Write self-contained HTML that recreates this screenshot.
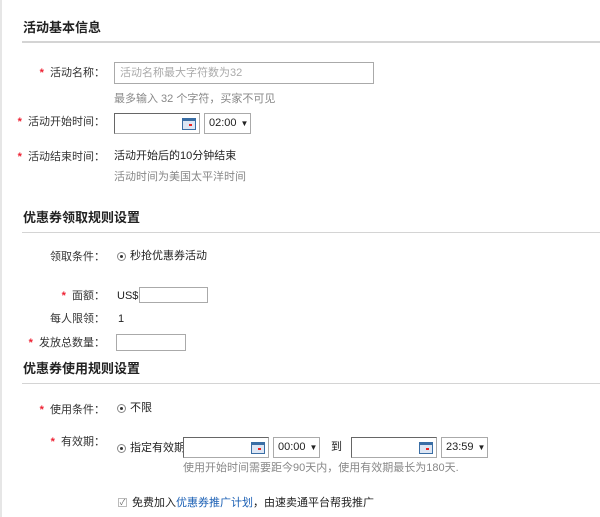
<!DOCTYPE html><html><head><meta charset="utf-8"><style>
body{margin:0;width:600px;height:517px;background:#fff;position:relative;overflow:hidden;font-family:"Liberation Sans","Noto Sans CJK SC",sans-serif;font-size:11px;color:#333}
.a{position:absolute;white-space:nowrap;line-height:14px}
.h{font-size:13px;font-weight:bold;color:#222}
.ln{position:absolute;left:22px;right:0;height:1px;background:#d4d4d4}
.s{color:#e23;font-weight:bold;margin-right:3px}
.r{position:absolute;text-align:right;white-space:nowrap;line-height:14px;width:110px;left:-5px}
.g{color:#888}
.in{position:absolute;border:1px solid #aaa;box-sizing:border-box;background:#fff}
.dt{position:absolute;border:1px solid #aaa;border-top-color:#666;border-left-color:#666;box-sizing:border-box;background:#fff}
.cal{position:absolute;right:3px;top:4px;width:14px;height:12px;border:1px solid #3a6ea5;border-top-width:3px;background:#dde6f4;box-sizing:border-box}
.cal:after{content:"";position:absolute;left:6px;top:3px;width:3px;height:2px;background:#e22}
.sel{position:absolute;border:1px solid #aaa;box-sizing:border-box;background:#fff;line-height:19px;padding-left:4px;font-size:11px;color:#222}
.sel b{font-size:8px;margin-left:4px}
.rad{position:absolute;width:9px;height:9px;border:1px solid #888;border-radius:50%;box-sizing:border-box}
.rad:after{content:"";position:absolute;left:2px;top:2px;width:3px;height:3px;border-radius:50%;background:#333}
</style></head><body>
<div style="position:absolute;left:0;top:0;width:2px;height:517px;background:#e6e6e6"></div>
<div class="a h" style="left:23px;top:21px">活动基本信息</div>
<div class="ln" style="top:41px;height:2px"></div>
<div class="r" style="top:66px"><span class="s">*</span> 活动名称：</div>
<div class="in" style="left:114px;top:62px;width:260px;height:22px"></div>
<div class="a g" style="left:120px;top:66px;color:#aaa">活动名称最大字符数为32</div>
<div class="a g" style="left:114px;top:92px">最多输入 32 个字符，买家不可见</div>
<div class="r" style="top:115px"><span class="s">*</span> 活动开始时间：</div>
<div class="dt" style="left:114px;top:113px;width:86px;height:21px"><div class="cal"></div></div>
<div class="sel" style="left:204px;top:113px;width:47px;height:21px">02:00<b>▼</b></div>
<div class="r" style="top:150px"><span class="s">*</span> 活动结束时间：</div>
<div class="a" style="left:114px;top:149px;color:#222">活动开始后的10分钟结束</div>
<div class="a g" style="left:114px;top:170px">活动时间为美国太平洋时间</div>
<div class="a h" style="left:23px;top:211px">优惠券领取规则设置</div>
<div class="ln" style="top:232px"></div>
<div class="r" style="top:250px">领取条件：</div>
<div class="rad" style="left:117px;top:252px"></div>
<div class="a" style="left:130px;top:249px;color:#222">秒抢优惠券活动</div>
<div class="r" style="top:289px"><span class="s">*</span> 面额：</div>
<div class="a" style="left:117px;top:289px;color:#222">US$</div>
<div class="in" style="left:139px;top:287px;width:69px;height:16px"></div>
<div class="r" style="top:312px">每人限领：</div>
<div class="a" style="left:118px;top:312px;color:#222">1</div>
<div class="r" style="top:336px"><span class="s">*</span> 发放总数量：</div>
<div class="in" style="left:116px;top:334px;width:70px;height:17px"></div>
<div class="a h" style="left:23px;top:362px">优惠券使用规则设置</div>
<div class="ln" style="top:383px"></div>
<div class="r" style="top:403px"><span class="s">*</span> 使用条件：</div>
<div class="rad" style="left:117px;top:404px"></div>
<div class="a" style="left:130px;top:401px;color:#222">不限</div>
<div class="r" style="top:435px"><span class="s">*</span> 有效期：</div>
<div class="rad" style="left:117px;top:444px"></div>
<div class="a" style="left:130px;top:441px;color:#222">指定有效期</div>
<div class="dt" style="left:183px;top:437px;width:86px;height:21px"><div class="cal"></div></div>
<div class="sel" style="left:273px;top:437px;width:47px;height:21px">00:00<b>▼</b></div>
<div class="a" style="left:331px;top:440px;color:#222">到</div>
<div class="dt" style="left:351px;top:437px;width:86px;height:21px"><div class="cal"></div></div>
<div class="sel" style="left:441px;top:437px;width:47px;height:21px">23:59<b>▼</b></div>
<div class="a g" style="left:183px;top:461px">使用开始时间需要距今90天内，使用有效期最长为180天.</div>
<div style="position:absolute;left:118px;top:498px;width:9px;height:9px;border:1px solid #bbb;box-sizing:border-box;font-size:8px;line-height:7px;color:#666;text-align:center">✓</div>
<div class="a" style="left:132px;top:496px;color:#222">免费加入<span style="color:#1a5fb4">优惠券推广计划</span>，由速卖通平台帮我推广</div>
</body></html>
